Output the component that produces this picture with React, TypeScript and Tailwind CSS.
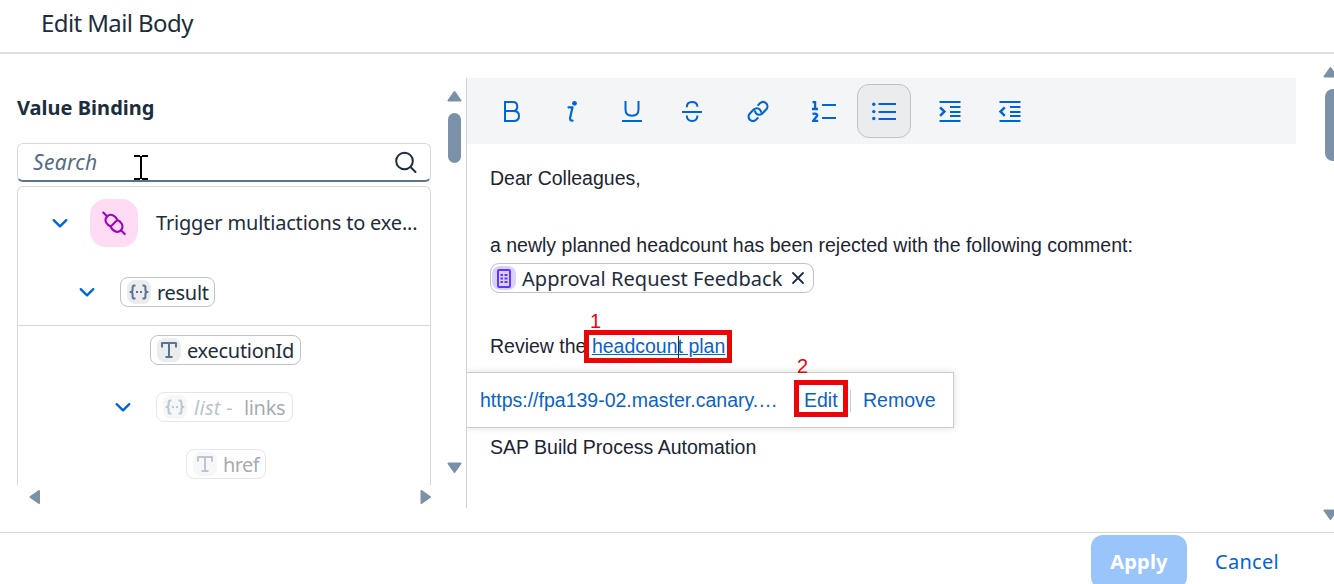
import React from "react";

const ink = "font-['Noto_Sans',sans-serif] text-[#1d2d3e]";

function Chevron() {
  return (
    <svg width="16" height="10" viewBox="0 0 16 10" fill="none" stroke="#0064d9" strokeWidth="2.3" strokeLinecap="round" strokeLinejoin="round" className="shrink-0 translate-y-[0.5px]">
      <path d="M1.7 1.6 8 7.9l6.3-6.3" />
    </svg>
  );
}

function Arrow({ dir }: { dir: "up" | "down" | "left" | "right" }) {
  const paths = {
    up: "M7.500 4 13.500 12.500h-12z",
    down: "M7.500 12 1.500 3.500h12z",
    left: "M4.500 8 13 2v12z",
    right: "M13 8 4.500 2v12z",
  };
  return (
    <svg width="16" height="16" viewBox="0 0 16 16" fill="#7b91a8" stroke="#7b91a8" strokeWidth="2" strokeLinejoin="round" className="shrink-0">
      <path d={paths[dir]} />
    </svg>
  );
}

function TypeIcon({ kind }: { kind: "object" | "text" }) {
  return (
    <span className="grid size-6 shrink-0 place-items-center rounded-[8px] bg-[#eaecee]">
      <svg width="24" height="24" viewBox="0 0 24 24" fill="none" stroke="#5b738b" strokeWidth="2" strokeLinejoin="round">
        {kind === "object" ? (
          <>
            <path d="M8.500 5.400H7.500c-1.400 0-1.900.7-1.900 1.900v2.300c0 1.300-.8 2.400-2.100 2.400 1.300 0 2.100 1.100 2.100 2.400v2.300c0 1.200.5 1.900 1.900 1.900h1M15.500 5.400h1c1.400 0 1.900.7 1.900 1.900v2.300c0 1.300.8 2.400 2.100 2.400-1.300 0-2.100 1.100-2.100 2.400v2.300c0 1.200-.5 1.900-1.900 1.900h-1" />
            <path d="M9 12h2M13 12h2" />
          </>
        ) : (
          <path d="M5 9.600V5h14v4.600M12 5v14M8.500 19.100h7" />
        )}
      </svg>
    </span>
  );
}

function Tag({ kind, disabled, className, children }: { kind: "object" | "text"; disabled?: boolean; className: string; children: React.ReactNode }) {
  return (
    <div className={`flex h-[30px] items-center gap-[6px] rounded-[8px] border border-[#bcc3ca] pl-[6px] text-xl leading-7 whitespace-pre ${ink} ${disabled ? "opacity-40" : ""} ${className}`}>
      <TypeIcon kind={kind} />
      <span className="pt-[2px]">{children}</span>
    </div>
  );
}

function ToolButton({ active, children }: { active?: boolean; children: React.ReactNode }) {
  return (
    <button className={`grid size-[54px] shrink-0 place-items-center rounded-[12px] border ${active ? "border-[#bcc3ca] bg-[#eaecee]" : "border-transparent"}`}>
      <svg width="24" height="24" viewBox="0 0 24 24" fill="none" stroke="#0064d9" strokeWidth="2">
        {children}
      </svg>
    </button>
  );
}

function Toolbar() {
  return (
    <div className="flex h-[66px] w-[829px] items-center bg-[#f4f5f7] pl-[18px]">
      <div className="flex gap-[6px]">
        <ToolButton>
          <path d="M5 3h7.500c3 0 4.800 1.800 4.800 4.400S15.600 12 12.500 12H5zM5 12h8.500c3.600 0 5.500 2 5.500 4.900S17.100 22 13.500 22H5z" />
        </ToolButton>
        <ToolButton>
          <path d="M8.500 8.300h4l-2.300 10.200c-.4 2 .1 3.200 2.400 3.200" strokeWidth="2.200" strokeLinecap="round" strokeLinejoin="round" />
          <circle cx="14.500" cy="4.300" r="2.400" fill="#0064d9" stroke="none" />
        </ToolButton>
        <ToolButton>
          <path d="M5.500 2v8.500c0 4 2.200 6.200 6.500 6.200s6.500-2.200 6.500-6.200V2M2 22h20" />
        </ToolButton>
        <ToolButton>
          <path d="M6.800 8.300C6.800 5 8.800 3 12 3s5.400 1.600 5.400 4.800M2 13h20M6.800 16.500C6.800 20 8.900 22 12.200 22s5.200-1.800 5.200-5.500" />
        </ToolButton>
      </div>
      <div className="flex gap-3 pl-3">
        <ToolButton>
          <g strokeLinecap="round" strokeWidth="2.100">
            <path d="M12.300 5.900l1.600-1.600c2.100-1.800 4.500-1.600 6.200 0 1.800 1.800 1.800 4.500 0 6.300l-3.800 3.800c-1.900 1.900-4.500 1.800-6.100.1-.7-.7-1.100-1.500-1.200-2.300" />
            <path d="M11.700 19.100l-1.600 1.600c-2.100 1.800-4.500 1.600-6.200 0-1.800-1.800-1.800-4.500 0-6.300l3.800-3.800c1.900-1.900 4.500-1.800 6.100-.1.700.7 1.100 1.500 1.200 2.300" />
          </g>
        </ToolButton>
        <ToolButton>
          <path d="M10 6h14M10 19h14" />
          <path d="M.5 3.200h2.600V10M0 10h6M.5 14.800c4.300-.6 6.100 1 3.400 3.500L1.200 21.800H6.200" strokeWidth="2.300" />
        </ToolButton>
      </div>
      <div className="pl-[6px]">
        <ToolButton active>
          <path d="M6.500 5H24M6.500 13H24M6.500 20H24" />
          <g fill="#0064d9" stroke="none">
            <circle cx="1.800" cy="5.300" r="1.700" />
            <circle cx="1.800" cy="12.600" r="1.700" />
            <circle cx="1.800" cy="19.500" r="1.700" />
          </g>
        </ToolButton>
      </div>
      <div className="flex gap-[6px] pl-3">
        <ToolButton>
          <path d="M1.500 3h21M1.500 22h21M12 8h10.500M12 13h10.500M12 17h10.500" />
          <path d="m2.100 8.300 4.300 4.300-4.300 4.300" strokeWidth="2.500" />
        </ToolButton>
        <ToolButton>
          <path d="M1.500 3h21M1.500 22h21M12 8h10.500M12 13h10.500M12 17h10.500" />
          <path d="m6.800 8.300-4.300 4.300 4.300 4.300" strokeWidth="2.500" />
        </ToolButton>
      </div>
    </div>
  );
}

function ValueBinding() {
  return (
    <aside className="flex h-[430px] w-[467px] shrink-0 border-r border-[#d0d3d7]">
      <div className="w-[431px] pl-[17px]">
        <h2 className={`mt-[14px] text-xl leading-8 font-bold tracking-[0.020px] ${ink}`}>Value Binding</h2>
        <div className="relative mt-[19px] flex h-[39px] items-center justify-between rounded-[6px] border border-b-2 border-[#d3d9e0] border-b-[#5b738b] pr-[12px] pl-[15px]">
          <span className="font-['Noto_Sans',sans-serif] text-[21px] leading-8 tracking-[0.300px] text-[#556b82] italic">Search</span>
          <svg width="24" height="24" viewBox="0 0 24 24" fill="none" stroke="#1d2d3e" strokeWidth="2" strokeLinecap="round">
            <circle cx="10.500" cy="11" r="8.300" />
            <path d="m16.500 17 5 5" />
          </svg>
          <svg className="absolute top-[11px] left-[116px]" width="14" height="26" viewBox="0 0 14 26" fill="none" stroke="#000" strokeWidth="2">
            <path d="M0 1h6M8 1h6M0 24h6M8 24h6M7 1v23" />
          </svg>
        </div>
        <div className="mt-1 h-[299px] overflow-hidden rounded-t-[6px] border border-b-0 border-[#d9d9d9]">
          <div className="flex h-[72px] items-center pl-[34px]">
            <Chevron />
            <span className="ml-[22px] grid size-12 place-items-center rounded-[16px] bg-[#ffdcf3]">
              <svg width="26" height="26" viewBox="0 0 26 26" fill="none" stroke="#a100c2" strokeWidth="2.100" strokeLinecap="round">
                <g transform="translate(13 13.300) rotate(45)">
                  <path d="M-15.200 0h5.500M9.700 0h5.500" />
                  <path d="M0-4.700C2.500-6 9.700-6 9.700 0S2.500 6 0 4.700C-2.500 6-9.700 6-9.700 0S-2.500-6 0-4.700zM0-4.700V4.700" />
                </g>
              </svg>
            </span>
            <span className={`ml-[18px] text-xl tracking-[-0.180px] whitespace-nowrap ${ink}`}>Trigger multiactions to exe...</span>
          </div>
          <div className="flex h-[67px] items-center border-b border-[#d9d9d9] pl-[61px]">
            <Chevron />
            <Tag kind="object" className="ml-[25px] w-[95px] tracking-[-0.300px]">result</Tag>
          </div>
          <div className="flex h-[48px] items-center pl-[132px]">
            <Tag kind="text" className="w-[151px] tracking-[-0.280px]">executionId</Tag>
          </div>
          <div className="flex h-[66px] items-center pl-[97px]">
            <Chevron />
            <Tag kind="object" disabled className="ml-[25px] w-[137px]">
              <i className="pl-px tracking-[0.300px] text-[#556b82]">list -  </i><span className="tracking-[-0.300px]">links</span>
            </Tag>
          </div>
          <div className="flex h-[48px] items-center pl-[168px]">
            <Tag kind="text" disabled className="w-[80px] tracking-[-0.600px]">href</Tag>
          </div>
        </div>
        <div className="-mr-2 ml-[9px] mt-1 flex justify-between pr-[6px]">
          <Arrow dir="left" />
          <Arrow dir="right" />
        </div>
      </div>
      <div className="flex w-[35px] flex-col items-center pt-[10px] pl-[12px]">
        <Arrow dir="up" />
        <span className="mt-[9px] h-[50px] w-[13px] shrink-0 rounded-full bg-[#7b91a8]" />
        <span className="mt-[297px]"><Arrow dir="down" /></span>
      </div>
    </aside>
  );
}

function LinkTooltip() {
  return (
    <div className="absolute top-[294px] left-0 flex h-[56px] w-[487px] items-center border border-l-0 border-[#ccc] bg-white pt-[2px] pl-[13px] text-[19.500px] whitespace-nowrap text-[#0a62c9] [clip-path:inset(-40px_-8px_-8px_0)] shadow-[0_0_7px_#ddd]">
      <span className="w-[300px]">https://fpa139-02.master.canary.…</span>
      <span className="relative ml-[24px] w-[34px]">
        Edit
        <Marker label="2" className="-top-[6px] -left-[10px] h-[37px] w-[54px]" labelClassName="-top-[31px] -left-[2px]" />
      </span>
      <span className="ml-[12px] h-[22px] w-px bg-[#ccc]" />
      <span className="ml-[12px]">Remove</span>
    </div>
  );
}

function Marker({ label, className, labelClassName }: { label: string; className: string; labelClassName: string }) {
  return (
    <span className={`pointer-events-none absolute border-[5px] border-[#ea0607] ${className}`}>
      <span className={`absolute text-xl leading-6 text-[#ea0607] ${labelClassName}`}>{label}</span>
    </span>
  );
}

function Editor() {
  return (
    <section className="relative h-[430px] w-[829px] shrink-0 font-['Liberation_Sans',sans-serif] text-[19.500px]">
      <Toolbar />
      <div className="pt-[18px] pl-[23px] leading-[33.600px] text-[#1d2433]">
        <p>Dear Colleagues,</p>
        <p>&nbsp;</p>
        <p>a newly planned headcount has been rejected with the following comment:</p>
        <div className="-mt-[2px] mb-[2px] flex h-[33.600px] items-center">
          <span className={`flex h-[30px] w-[324px] items-center rounded-[9px] border border-[#bcc3ca] pl-px text-xl ${ink}`}>
            <span className="grid size-6 place-items-center rounded-[8px] bg-[#dcd0ff]">
              <svg width="24" height="24" viewBox="0 0 24 24" fill="none" stroke="#5d36ff" strokeWidth="2">
                <rect x="6" y="4" width="12" height="17" rx="1" />
                <path d="M8.500 9h2.500M12.500 9h3M8.500 12.500h2.500M12.500 12.500h3M8.500 16h2.500M12.500 16h3" />
              </svg>
            </span>
            <span className="ml-[6px] w-[261px] pt-[2px] tracking-[0.040px] whitespace-nowrap">Approval Request Feedback</span>
            <svg className="ml-2" width="14" height="14" viewBox="0 0 14 14" fill="none" stroke="#1d2d3e" strokeWidth="1.800" strokeLinecap="round">
              <path d="m2 2 10 10M12 2 2 12" />
            </svg>
          </span>
        </div>
        <p>&nbsp;</p>
        <p>
          Review the{" "}
          <span className="relative inline-block text-[#0a62c9]">
            <span className="underline">headcount plan</span>
            <span className="absolute top-[6px] left-[86px] h-[22px] w-px bg-[#1d2d3e]" />
            <Marker label="1" className="top-0 -left-[8px] h-[33px] w-[148px]" labelClassName="-top-[26px] left-[1px]" />
          </span>
        </p>
        <p>&nbsp;</p>
        <p>&nbsp;</p>
        <p>SAP Build Process Automation</p>
      </div>
      <LinkTooltip />
    </section>
  );
}

export default function App() {
  return (
    <div className="flex h-[584px] w-[1334px] flex-col overflow-hidden bg-white">
      <header className="flex h-[54px] shrink-0 items-center border-b-2 border-[#dedfe1] pb-[6px] pl-[41px]">
        <h1 className={`text-2xl tracking-[-0.600px] ${ink}`}>Edit Mail Body</h1>
      </header>
      <main className="flex h-[478px] shrink-0 pt-6">
        <ValueBinding />
        <Editor />
        <div className="-mt-[14px] flex h-[458px] flex-col items-center pl-[27px]">
          <Arrow dir="up" />
          <span className="mt-[9px] h-[72px] w-4 shrink-0 translate-x-[2px] rounded-full bg-[#7b91a8]" />
          <span className="mt-[346px]"><Arrow dir="down" /></span>
        </div>
      </main>
      <footer className="flex h-[70px] shrink-0 justify-end border-t border-[#d9d9d9] pt-[2px] pr-[55px] font-['Noto_Sans',sans-serif] text-xl">
        <button className="h-[54px] w-[96px] rounded-[12px] bg-[#99c5fb] font-bold tracking-[0.200px] text-white">Apply</button>
        <button className="ml-7 h-[54px] tracking-[0.300px] text-[#0064d9]">Cancel</button>
      </footer>
    </div>
  );
}
